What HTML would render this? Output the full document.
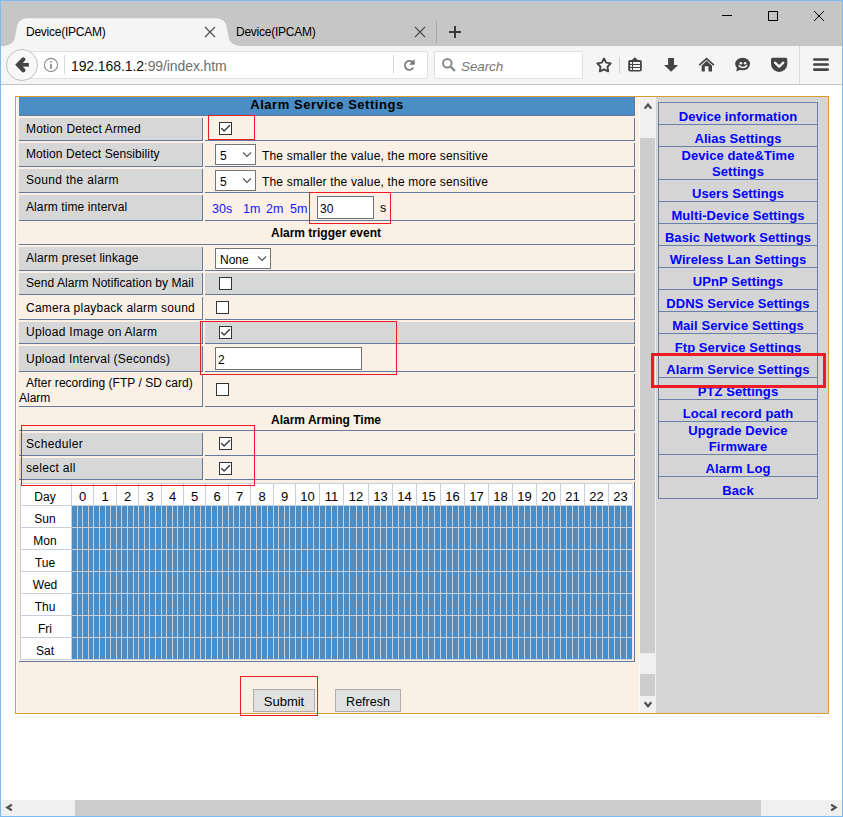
<!DOCTYPE html>
<html><head><meta charset="utf-8"><title>Alarm Service Settings</title>
<style>
*{box-sizing:border-box;margin:0;padding:0}
html,body{width:843px;height:817px;overflow:hidden;background:#fff;font-family:"Liberation Sans",sans-serif;color:#000}
.a{position:absolute}
.t{white-space:nowrap}
svg{display:block}
</style></head><body>

<div class="a" style="left:0px;top:0px;width:843px;height:817px;background:#7cbaf2;"></div>
<div class="a" style="left:1px;top:1px;width:841px;height:815px;background:#ffffff;"></div>
<div class="a" style="left:1px;top:1px;width:841px;height:45px;background:#c6c6c6;"></div>
<div class="a" style="left:1px;top:46px;width:841px;height:38px;background:#f5f5f5;"></div>
<div class="a" style="left:1px;top:84px;width:841px;height:1px;background:#c4c4c4;"></div>
<svg class="a" style="left:0;top:0" width="260" height="47" viewBox="0 0 260 47"><path d="M1 46 C9 46 13.6 43.5 15 37 L17 26.5 C18.3 20.5 22 18.2 29 18.2 L214.6 18.2 C221.6 18.2 225.3 20.5 226.6 26.5 L228.6 37 C230 43.5 234.6 46 242.6 46 Z" fill="#f5f5f5"/></svg>
<div class="a t" style="left:26px;top:26px;font-size:12px;line-height:12px;color:#000;letter-spacing:-0.25px;">Device(IPCAM)</div>
<div class="a t" style="left:236px;top:26px;font-size:12px;line-height:12px;color:#000;letter-spacing:-0.25px;">Device(IPCAM)</div>
<svg class="a" style="left:204px;top:26px" width="12" height="12" viewBox="0 0 12 12"><path d="M1 1 L11 11 M11 1 L1 11" stroke="#4a4a4a" stroke-width="1.1"/></svg>
<svg class="a" style="left:414px;top:26px" width="12" height="12" viewBox="0 0 12 12"><path d="M1 1 L11 11 M11 1 L1 11" stroke="#4a4a4a" stroke-width="1.1"/></svg>
<div class="a" style="left:436px;top:21px;width:1px;height:22px;background:#a8a8a8;"></div>
<svg class="a" style="left:448px;top:25px" width="14" height="14" viewBox="0 0 14 14"><path d="M7 1 V13 M1 7 H13" stroke="#3a3a3a" stroke-width="2"/></svg>
<div class="a" style="left:722px;top:15px;width:10px;height:1px;background:#000;"></div>
<div class="a" style="left:768px;top:11px;width:10px;height:10px;border:1px solid #000"></div>
<svg class="a" style="left:813px;top:10px" width="12" height="12" viewBox="0 0 12 12"><path d="M1 1 L11 11 M11 1 L1 11" stroke="#000" stroke-width="1"/></svg>
<div class="a" style="left:30px;top:51px;width:398px;height:28px;border:1px solid #e0e0e0;background:#fff;border-radius:0 2px 2px 0"></div>
<div class="a" style="left:6px;top:49px;width:32px;height:32px;border:1px solid #c2c2c2;border-radius:50%;background:#f8f8f8"></div>
<svg class="a" style="left:14px;top:57px" width="16" height="16" viewBox="0 0 16 16"><path d="M9.3 2.4 L4.1 7.8 L9.3 13.2" fill="none" stroke="#454545" stroke-width="4.2" stroke-linejoin="miter" stroke-linecap="round"/><path d="M5 7.8 H14.9" stroke="#454545" stroke-width="3.7"/></svg>
<svg class="a" style="left:43px;top:57px" width="16" height="16" viewBox="0 0 16 16"><circle cx="8" cy="8" r="6.6" fill="none" stroke="#8a8a8a" stroke-width="1.1"/><rect x="7.1" y="7.2" width="1.8" height="4.7" fill="#8a8a8a"/><rect x="7.1" y="4.1" width="1.8" height="1.6" fill="#8a8a8a"/></svg>
<div class="a" style="left:64px;top:55px;width:1px;height:19px;background:#d8d8d8;"></div>
<div class="a t" style="left:71px;top:58px;font-size:14px;line-height:16px;letter-spacing:-0.1px"><span style="color:#111">192.168.1.2</span><span style="color:#6e6e6e">:99/index.htm</span></div>
<div class="a" style="left:393px;top:55px;width:1px;height:19px;background:#d8d8d8;"></div>
<svg class="a" style="left:402px;top:57px" width="16" height="16" viewBox="0 0 16 16"><path d="M10.26 4.99 A4.45 4.45 0 1 0 10.81 11.26" fill="none" stroke="#727272" stroke-width="1.75" stroke-linecap="round"/><path d="M12.6 2 L12.6 7.8 L7.2 7.8 Z" fill="#727272"/></svg>
<div class="a" style="left:434px;top:51px;width:149px;height:28px;border:1px solid #e0e0e0;background:#fff;border-radius:2px"></div>
<svg class="a" style="left:441px;top:57px" width="16" height="16" viewBox="0 0 16 16"><circle cx="6.3" cy="6.3" r="4.3" fill="none" stroke="#8a8a8a" stroke-width="2"/><path d="M9.3 9.3 L14 14" stroke="#8a8a8a" stroke-width="2.4"/></svg>
<div class="a t" style="left:461px;top:60px;font-size:13.5px;line-height:13.5px;color:#777;letter-spacing:-0.1px;font-style:italic;">Search</div>
<svg class="a" style="left:595px;top:56px" width="18" height="18" viewBox="0 0 18 18"><path d="M9.00 2.50 L11.17 6.61 L15.75 7.41 L12.52 10.74 L13.17 15.34 L9.00 13.30 L4.83 15.34 L5.48 10.74 L2.25 7.41 L6.83 6.61 Z" fill="none" stroke="#444" stroke-width="1.9" stroke-linejoin="round"/></svg>
<div class="a" style="left:619px;top:57px;width:1px;height:16px;background:#cfcfcf;"></div>
<svg class="a" style="left:627px;top:56px" width="16" height="17" viewBox="0 0 16 17"><rect x="1.2" y="4" width="13.6" height="11.6" rx="1.8" fill="#444"/><path d="M7.9 1.2 L4.7 4.3 L11.1 4.3 Z" fill="#444"/><rect x="3.2" y="6" width="1.8" height="2" fill="#f5f5f5"/><rect x="6" y="6" width="7" height="2" fill="#f5f5f5"/><rect x="3.2" y="9" width="1.8" height="2" fill="#f5f5f5"/><rect x="6" y="9" width="7" height="2" fill="#f5f5f5"/><rect x="3.2" y="12" width="1.8" height="2" fill="#f5f5f5"/><rect x="6" y="12" width="7" height="2" fill="#f5f5f5"/></svg>
<svg class="a" style="left:663px;top:57px" width="17" height="16" viewBox="0 0 17 16"><path d="M5.1 0.9 H11 V8 H15.2 L8.1 14.7 L1 8 H5.1 Z" fill="#444"/></svg>
<svg class="a" style="left:698px;top:56px" width="18" height="17" viewBox="0 0 18 17"><path d="M1.3 9.2 L8.6 2.6 L15.9 9.2" fill="none" stroke="#444" stroke-width="1.7"/><path d="M8.6 4.8 L14 9.7 V15.6 H10.5 V10.3 H6.8 V15.6 H3.7 V9.7 Z" fill="#444"/></svg>
<svg class="a" style="left:734px;top:56px" width="17" height="17" viewBox="0 0 17 17"><ellipse cx="8.6" cy="8" rx="7.4" ry="6.3" fill="#444"/><path d="M3.2 11.5 L2.2 15.4 L7 13.6 Z" fill="#444"/><circle cx="6.9" cy="7.2" r="1.3" fill="#f5f5f5"/><circle cx="11.1" cy="7.2" r="1.3" fill="#f5f5f5"/><path d="M4.6 9.4 Q8.9 13.6 13.2 9.4" fill="none" stroke="#f5f5f5" stroke-width="1.5"/></svg>
<svg class="a" style="left:770px;top:57px" width="19" height="17" viewBox="0 0 19 17"><path d="M1 2.5 Q1 0.8 2.7 0.8 H15.6 Q17.3 0.8 17.3 2.5 V7 A8.15 7.9 0 0 1 1 7 Z" fill="#444"/><path d="M5 5.7 L9.15 9.7 L13.3 5.7" fill="none" stroke="#f5f5f5" stroke-width="2.3" stroke-linecap="round" stroke-linejoin="round"/></svg>
<div class="a" style="left:799px;top:46px;width:1px;height:38px;background:#dcdcdc;"></div>
<svg class="a" style="left:812px;top:57px" width="18" height="16" viewBox="0 0 18 16"><path d="M2.3 2.5 H15.7 M2.3 7.5 H15.7 M2.3 12.6 H15.7" stroke="#444" stroke-width="2.6" stroke-linecap="round"/></svg>
<div class="a" style="left:1px;top:800px;width:841px;height:16px;background:#f0f0f0;"></div>
<div class="a" style="left:75px;top:800px;width:686px;height:16px;background:#cdcdcd;"></div>
<svg class="a" style="left:4px;top:803px" width="10" height="10" viewBox="0 0 10 10"><path d="M7.9 1.6 L3.4 4.5 L7.9 7.4" fill="none" stroke="#505050" stroke-width="2.3"/></svg>
<svg class="a" style="left:829px;top:803px" width="10" height="10" viewBox="0 0 10 10"><path d="M2.1 1.6 L6.6 4.5 L2.1 7.4" fill="none" stroke="#505050" stroke-width="2.3"/></svg>
<div class="a" style="left:15px;top:96px;width:814px;height:618px;border:1px solid #d59e36;background:#faf0e6"></div>
<div class="a" style="left:16px;top:97px;width:1px;height:616px;background:#fffaf4;"></div>
<div class="a" style="left:639px;top:97px;width:17px;height:616px;background:#f0f0f0;"></div>
<div class="a" style="left:640px;top:138px;width:15px;height:515px;background:#cdcdcd;"></div>
<div class="a" style="left:640px;top:674px;width:15px;height:22px;background:#cdcdcd;"></div>
<div class="a" style="left:639px;top:97px;width:1px;height:616px;background:#fafafa;"></div>
<svg class="a" style="left:642px;top:101px" width="12" height="10" viewBox="0 0 12 10"><path d="M2.7 7.6 L6 3.6 L9.3 7.6" fill="none" stroke="#505050" stroke-width="2.2"/></svg>
<svg class="a" style="left:642px;top:700px" width="12" height="10" viewBox="0 0 12 10"><path d="M2.7 2.3 L6 6.3 L9.3 2.3" fill="none" stroke="#505050" stroke-width="2.2"/></svg>
<div class="a" style="left:656px;top:97px;width:172px;height:616px;background:#d5d5d5;"></div>
<div class="a" style="left:19px;top:97px;width:616px;height:19px;background:#4a8ec5;border-right:1px solid #65799c;border-bottom:1px solid #65799c"></div>
<div class="a t" style="left:127px;width:400px;text-align:center;top:98px;font-size:13px;line-height:13px;color:#000;font-weight:bold;letter-spacing:0.54px;">Alarm Service Settings</div>
<div class="a" style="left:19px;top:118px;width:184px;height:23px;background:#d7d7d7;border-right:1px solid #65799c;border-bottom:1px solid #65799c"></div>
<div class="a" style="left:205px;top:118px;width:430px;height:23px;background:transparent;border-right:1px solid #65799c;border-bottom:1px solid #65799c"></div>
<div class="a t" style="left:26px;top:123px;font-size:12px;line-height:12px;color:#000;letter-spacing:0.15px;">Motion Detect Armed</div>
<svg class="a" style="left:219px;top:122px" width="13" height="13" viewBox="0 0 13 13"><rect x="0.5" y="0.5" width="12" height="12" fill="#fff" stroke="#333" stroke-width="1"/><path d="M2.6 6.4 L5.1 9.1 L10.6 3.4" fill="none" stroke="#3c3c3c" stroke-width="1.4" stroke-linecap="round" stroke-linejoin="round"/></svg>
<div class="a" style="left:19px;top:143px;width:184px;height:24px;background:#d7d7d7;border-right:1px solid #65799c;border-bottom:1px solid #65799c"></div>
<div class="a" style="left:205px;top:143px;width:430px;height:24px;background:transparent;border-right:1px solid #65799c;border-bottom:1px solid #65799c"></div>
<div class="a t" style="left:26px;top:148px;font-size:12px;line-height:12px;color:#000;letter-spacing:0.09px;">Motion Detect Sensibility</div>
<div class="a" style="left:215px;top:144px;width:41px;height:21px;border:1px solid #747474;background:#fff"></div>
<div class="a t" style="left:220px;top:150px;font-size:12px;line-height:12px;color:#000;">5</div>
<svg class="a" style="left:242px;top:151px" width="10" height="7" viewBox="0 0 10 7"><path d="M1 1.5 L5 5.5 L9 1.5" fill="none" stroke="#555" stroke-width="1.1"/></svg>
<div class="a t" style="left:262px;top:150px;font-size:12px;line-height:12px;color:#000;letter-spacing:0.18px;">The smaller the value, the more sensitive</div>
<div class="a" style="left:19px;top:169px;width:184px;height:24px;background:#d7d7d7;border-right:1px solid #65799c;border-bottom:1px solid #65799c"></div>
<div class="a" style="left:205px;top:169px;width:430px;height:24px;background:transparent;border-right:1px solid #65799c;border-bottom:1px solid #65799c"></div>
<div class="a t" style="left:26px;top:174px;font-size:12px;line-height:12px;color:#000;letter-spacing:0.32px;">Sound the alarm</div>
<div class="a" style="left:215px;top:170px;width:41px;height:21px;border:1px solid #747474;background:#fff"></div>
<div class="a t" style="left:220px;top:176px;font-size:12px;line-height:12px;color:#000;">5</div>
<svg class="a" style="left:242px;top:177px" width="10" height="7" viewBox="0 0 10 7"><path d="M1 1.5 L5 5.5 L9 1.5" fill="none" stroke="#555" stroke-width="1.1"/></svg>
<div class="a t" style="left:262px;top:176px;font-size:12px;line-height:12px;color:#000;letter-spacing:0.18px;">The smaller the value, the more sensitive</div>
<div class="a" style="left:19px;top:195px;width:184px;height:26px;background:#d7d7d7;border-right:1px solid #65799c;border-bottom:1px solid #65799c"></div>
<div class="a" style="left:205px;top:195px;width:430px;height:26px;background:transparent;border-right:1px solid #65799c;border-bottom:1px solid #65799c"></div>
<div class="a t" style="left:26px;top:201px;font-size:12px;line-height:12px;color:#000;letter-spacing:0.1px;">Alarm time interval</div>
<div class="a t" style="left:212px;top:203px;font-size:12.5px;line-height:12.5px;color:#1414ff;">30s</div>
<div class="a t" style="left:243px;top:203px;font-size:12.5px;line-height:12.5px;color:#1414ff;">1m</div>
<div class="a t" style="left:266px;top:203px;font-size:12.5px;line-height:12.5px;color:#1414ff;">2m</div>
<div class="a t" style="left:290px;top:203px;font-size:12.5px;line-height:12.5px;color:#1414ff;">5m</div>
<div class="a" style="left:317px;top:196px;width:57px;height:23px;border:1px solid #707070;background:#fff"></div>
<div class="a t" style="left:320px;top:203px;font-size:12px;line-height:12px;color:#000;">30</div>
<div class="a t" style="left:380px;top:202px;font-size:12.5px;line-height:12.5px;color:#000;">s</div>
<div class="a" style="left:19px;top:223px;width:616px;height:22px;border-right:1px solid #65799c;border-bottom:1px solid #65799c"></div>
<div class="a t" style="left:126px;width:400px;text-align:center;top:227px;font-size:12px;line-height:12px;color:#000;font-weight:bold;">Alarm trigger event</div>
<div class="a" style="left:19px;top:247px;width:184px;height:24px;background:#d7d7d7;border-right:1px solid #65799c;border-bottom:1px solid #65799c"></div>
<div class="a" style="left:205px;top:247px;width:430px;height:24px;background:transparent;border-right:1px solid #65799c;border-bottom:1px solid #65799c"></div>
<div class="a t" style="left:26px;top:252px;font-size:12px;line-height:12px;color:#000;letter-spacing:0.16px;">Alarm preset linkage</div>
<div class="a" style="left:215px;top:248px;width:56px;height:21px;border:1px solid #747474;background:#fff"></div>
<div class="a t" style="left:220px;top:254px;font-size:12px;line-height:12px;color:#000;">None</div>
<svg class="a" style="left:257px;top:255px" width="10" height="7" viewBox="0 0 10 7"><path d="M1 1.5 L5 5.5 L9 1.5" fill="none" stroke="#555" stroke-width="1.1"/></svg>
<div class="a" style="left:19px;top:273px;width:184px;height:22px;background:#d7d7d7;border-right:1px solid #65799c;border-bottom:1px solid #65799c"></div>
<div class="a" style="left:205px;top:273px;width:430px;height:22px;background:#d7d7d7;border-right:1px solid #65799c;border-bottom:1px solid #65799c"></div>
<div class="a t" style="left:26px;top:277px;font-size:12px;line-height:12px;color:#000;letter-spacing:0.05px;">Send Alarm Notification by Mail</div>
<svg class="a" style="left:219px;top:277px" width="13" height="13" viewBox="0 0 13 13"><rect x="0.5" y="0.5" width="12" height="12" fill="#fff" stroke="#333" stroke-width="1"/></svg>
<div class="a" style="left:19px;top:297px;width:184px;height:23px;background:transparent;border-right:1px solid #65799c;border-bottom:1px solid #65799c"></div>
<div class="a" style="left:205px;top:297px;width:430px;height:23px;background:transparent;border-right:1px solid #65799c;border-bottom:1px solid #65799c"></div>
<div class="a t" style="left:26px;top:302px;font-size:12px;line-height:12px;color:#000;letter-spacing:0.23px;">Camera playback alarm sound</div>
<svg class="a" style="left:216px;top:301px" width="13" height="13" viewBox="0 0 13 13"><rect x="0.5" y="0.5" width="12" height="12" fill="#fff" stroke="#333" stroke-width="1"/></svg>
<div class="a" style="left:19px;top:322px;width:184px;height:22px;background:#d7d7d7;border-right:1px solid #65799c;border-bottom:1px solid #65799c"></div>
<div class="a" style="left:205px;top:322px;width:430px;height:22px;background:#d7d7d7;border-right:1px solid #65799c;border-bottom:1px solid #65799c"></div>
<div class="a t" style="left:26px;top:326px;font-size:12px;line-height:12px;color:#000;letter-spacing:0.28px;">Upload Image on Alarm</div>
<svg class="a" style="left:219px;top:326px" width="13" height="13" viewBox="0 0 13 13"><rect x="0.5" y="0.5" width="12" height="12" fill="#fff" stroke="#333" stroke-width="1"/><path d="M2.6 6.4 L5.1 9.1 L10.6 3.4" fill="none" stroke="#3c3c3c" stroke-width="1.4" stroke-linecap="round" stroke-linejoin="round"/></svg>
<div class="a" style="left:19px;top:346px;width:184px;height:26px;background:#d7d7d7;border-right:1px solid #65799c;border-bottom:1px solid #65799c"></div>
<div class="a" style="left:205px;top:346px;width:430px;height:26px;background:transparent;border-right:1px solid #65799c;border-bottom:1px solid #65799c"></div>
<div class="a t" style="left:26px;top:353px;font-size:12px;line-height:12px;color:#000;letter-spacing:0.22px;">Upload Interval (Seconds)</div>
<div class="a" style="left:215px;top:347px;width:147px;height:23px;border:1px solid #707070;background:#fff"></div>
<div class="a t" style="left:218px;top:354px;font-size:12px;line-height:12px;color:#000;">2</div>
<div class="a" style="left:19px;top:374px;width:184px;height:33px;background:transparent;border-right:1px solid #65799c;border-bottom:1px solid #65799c"></div>
<div class="a" style="left:205px;top:374px;width:430px;height:33px;background:transparent;border-right:1px solid #65799c;border-bottom:1px solid #65799c"></div>
<div class="a t" style="left:26px;top:377px;font-size:12px;line-height:12px;color:#000;letter-spacing:0.03px;">After recording (FTP / SD card)</div>
<div class="a t" style="left:19px;top:392px;font-size:12px;line-height:12px;color:#000;">Alarm</div>
<svg class="a" style="left:216px;top:383px" width="13" height="13" viewBox="0 0 13 13"><rect x="0.5" y="0.5" width="12" height="12" fill="#fff" stroke="#333" stroke-width="1"/></svg>
<div class="a" style="left:19px;top:409px;width:616px;height:22px;border-right:1px solid #65799c;border-bottom:1px solid #65799c"></div>
<div class="a t" style="left:126px;width:400px;text-align:center;top:414px;font-size:12px;line-height:12px;color:#000;font-weight:bold;">Alarm Arming Time</div>
<div class="a" style="left:19px;top:433px;width:184px;height:23px;background:#d7d7d7;border-right:1px solid #65799c;border-bottom:1px solid #65799c"></div>
<div class="a" style="left:205px;top:433px;width:430px;height:23px;background:transparent;border-right:1px solid #65799c;border-bottom:1px solid #65799c"></div>
<div class="a t" style="left:26px;top:438px;font-size:12px;line-height:12px;color:#000;letter-spacing:0.35px;">Scheduler</div>
<svg class="a" style="left:219px;top:437px" width="13" height="13" viewBox="0 0 13 13"><rect x="0.5" y="0.5" width="12" height="12" fill="#fff" stroke="#333" stroke-width="1"/><path d="M2.6 6.4 L5.1 9.1 L10.6 3.4" fill="none" stroke="#3c3c3c" stroke-width="1.4" stroke-linecap="round" stroke-linejoin="round"/></svg>
<div class="a" style="left:19px;top:458px;width:184px;height:22px;background:#d7d7d7;border-right:1px solid #65799c;border-bottom:1px solid #65799c"></div>
<div class="a" style="left:205px;top:458px;width:430px;height:22px;background:transparent;border-right:1px solid #65799c;border-bottom:1px solid #65799c"></div>
<div class="a t" style="left:26px;top:462px;font-size:12px;line-height:12px;color:#000;letter-spacing:0.3px;">select all</div>
<svg class="a" style="left:219px;top:462px" width="13" height="13" viewBox="0 0 13 13"><rect x="0.5" y="0.5" width="12" height="12" fill="#fff" stroke="#333" stroke-width="1"/><path d="M2.6 6.4 L5.1 9.1 L10.6 3.4" fill="none" stroke="#3c3c3c" stroke-width="1.4" stroke-linecap="round" stroke-linejoin="round"/></svg>
<div class="a" style="left:19px;top:482px;width:616px;height:180px;border-right:1px solid #65799c;border-bottom:1px solid #65799c"></div>
<div class="a" style="left:20px;top:483px;width:613px;height:177px;background:#ffffff;"></div>
<div class="a" style="left:72px;top:506px;width:560px;height:153px;background:#4a8ec5;"></div>
<div class="a" style="left:20px;top:483px;width:613px;height:1px;background:#c9cfd9;"></div>
<div class="a" style="left:20px;top:505px;width:613px;height:1px;background:#c9cfd9;"></div>
<div class="a" style="left:20px;top:527px;width:613px;height:1px;background:#c9cfd9;"></div>
<div class="a" style="left:20px;top:549px;width:613px;height:1px;background:#c9cfd9;"></div>
<div class="a" style="left:20px;top:571px;width:613px;height:1px;background:#c9cfd9;"></div>
<div class="a" style="left:20px;top:593px;width:613px;height:1px;background:#c9cfd9;"></div>
<div class="a" style="left:20px;top:615px;width:613px;height:1px;background:#c9cfd9;"></div>
<div class="a" style="left:20px;top:637px;width:613px;height:1px;background:#c9cfd9;"></div>
<div class="a" style="left:20px;top:659px;width:613px;height:1px;background:#c9cfd9;"></div>
<div class="a" style="left:20px;top:483px;width:1px;height:177px;background:#c9cfd9;"></div>
<div class="a" style="left:71px;top:483px;width:1px;height:177px;background:#c9cfd9;"></div>
<div class="a" style="left:77px;top:506px;width:1px;height:153px;background:#c9cfd9;"></div>
<div class="a" style="left:82px;top:506px;width:1px;height:153px;background:#c9cfd9;"></div>
<div class="a" style="left:88px;top:506px;width:1px;height:153px;background:#c9cfd9;"></div>
<div class="a" style="left:93px;top:483px;width:1px;height:177px;background:#c9cfd9;"></div>
<div class="a" style="left:99px;top:506px;width:1px;height:153px;background:#c9cfd9;"></div>
<div class="a" style="left:105px;top:506px;width:1px;height:153px;background:#c9cfd9;"></div>
<div class="a" style="left:110px;top:506px;width:1px;height:153px;background:#c9cfd9;"></div>
<div class="a" style="left:116px;top:483px;width:1px;height:177px;background:#c9cfd9;"></div>
<div class="a" style="left:121px;top:506px;width:1px;height:153px;background:#c9cfd9;"></div>
<div class="a" style="left:127px;top:506px;width:1px;height:153px;background:#c9cfd9;"></div>
<div class="a" style="left:133px;top:506px;width:1px;height:153px;background:#c9cfd9;"></div>
<div class="a" style="left:138px;top:483px;width:1px;height:177px;background:#c9cfd9;"></div>
<div class="a" style="left:144px;top:506px;width:1px;height:153px;background:#c9cfd9;"></div>
<div class="a" style="left:149px;top:506px;width:1px;height:153px;background:#c9cfd9;"></div>
<div class="a" style="left:155px;top:506px;width:1px;height:153px;background:#c9cfd9;"></div>
<div class="a" style="left:161px;top:483px;width:1px;height:177px;background:#c9cfd9;"></div>
<div class="a" style="left:166px;top:506px;width:1px;height:153px;background:#c9cfd9;"></div>
<div class="a" style="left:172px;top:506px;width:1px;height:153px;background:#c9cfd9;"></div>
<div class="a" style="left:177px;top:506px;width:1px;height:153px;background:#c9cfd9;"></div>
<div class="a" style="left:183px;top:483px;width:1px;height:177px;background:#c9cfd9;"></div>
<div class="a" style="left:189px;top:506px;width:1px;height:153px;background:#c9cfd9;"></div>
<div class="a" style="left:194px;top:506px;width:1px;height:153px;background:#c9cfd9;"></div>
<div class="a" style="left:200px;top:506px;width:1px;height:153px;background:#c9cfd9;"></div>
<div class="a" style="left:205px;top:483px;width:1px;height:177px;background:#c9cfd9;"></div>
<div class="a" style="left:211px;top:506px;width:1px;height:153px;background:#c9cfd9;"></div>
<div class="a" style="left:217px;top:506px;width:1px;height:153px;background:#c9cfd9;"></div>
<div class="a" style="left:222px;top:506px;width:1px;height:153px;background:#c9cfd9;"></div>
<div class="a" style="left:228px;top:483px;width:1px;height:177px;background:#c9cfd9;"></div>
<div class="a" style="left:233px;top:506px;width:1px;height:153px;background:#c9cfd9;"></div>
<div class="a" style="left:239px;top:506px;width:1px;height:153px;background:#c9cfd9;"></div>
<div class="a" style="left:245px;top:506px;width:1px;height:153px;background:#c9cfd9;"></div>
<div class="a" style="left:250px;top:483px;width:1px;height:177px;background:#c9cfd9;"></div>
<div class="a" style="left:256px;top:506px;width:1px;height:153px;background:#c9cfd9;"></div>
<div class="a" style="left:261px;top:506px;width:1px;height:153px;background:#c9cfd9;"></div>
<div class="a" style="left:267px;top:506px;width:1px;height:153px;background:#c9cfd9;"></div>
<div class="a" style="left:273px;top:483px;width:1px;height:177px;background:#c9cfd9;"></div>
<div class="a" style="left:278px;top:506px;width:1px;height:153px;background:#c9cfd9;"></div>
<div class="a" style="left:284px;top:506px;width:1px;height:153px;background:#c9cfd9;"></div>
<div class="a" style="left:289px;top:506px;width:1px;height:153px;background:#c9cfd9;"></div>
<div class="a" style="left:295px;top:483px;width:1px;height:177px;background:#c9cfd9;"></div>
<div class="a" style="left:301px;top:506px;width:1px;height:153px;background:#c9cfd9;"></div>
<div class="a" style="left:307px;top:506px;width:1px;height:153px;background:#c9cfd9;"></div>
<div class="a" style="left:313px;top:506px;width:1px;height:153px;background:#c9cfd9;"></div>
<div class="a" style="left:319px;top:483px;width:1px;height:177px;background:#c9cfd9;"></div>
<div class="a" style="left:325px;top:506px;width:1px;height:153px;background:#c9cfd9;"></div>
<div class="a" style="left:331px;top:506px;width:1px;height:153px;background:#c9cfd9;"></div>
<div class="a" style="left:337px;top:506px;width:1px;height:153px;background:#c9cfd9;"></div>
<div class="a" style="left:343px;top:483px;width:1px;height:177px;background:#c9cfd9;"></div>
<div class="a" style="left:349px;top:506px;width:1px;height:153px;background:#c9cfd9;"></div>
<div class="a" style="left:356px;top:506px;width:1px;height:153px;background:#c9cfd9;"></div>
<div class="a" style="left:362px;top:506px;width:1px;height:153px;background:#c9cfd9;"></div>
<div class="a" style="left:368px;top:483px;width:1px;height:177px;background:#c9cfd9;"></div>
<div class="a" style="left:374px;top:506px;width:1px;height:153px;background:#c9cfd9;"></div>
<div class="a" style="left:380px;top:506px;width:1px;height:153px;background:#c9cfd9;"></div>
<div class="a" style="left:386px;top:506px;width:1px;height:153px;background:#c9cfd9;"></div>
<div class="a" style="left:392px;top:483px;width:1px;height:177px;background:#c9cfd9;"></div>
<div class="a" style="left:398px;top:506px;width:1px;height:153px;background:#c9cfd9;"></div>
<div class="a" style="left:404px;top:506px;width:1px;height:153px;background:#c9cfd9;"></div>
<div class="a" style="left:410px;top:506px;width:1px;height:153px;background:#c9cfd9;"></div>
<div class="a" style="left:416px;top:483px;width:1px;height:177px;background:#c9cfd9;"></div>
<div class="a" style="left:422px;top:506px;width:1px;height:153px;background:#c9cfd9;"></div>
<div class="a" style="left:428px;top:506px;width:1px;height:153px;background:#c9cfd9;"></div>
<div class="a" style="left:434px;top:506px;width:1px;height:153px;background:#c9cfd9;"></div>
<div class="a" style="left:440px;top:483px;width:1px;height:177px;background:#c9cfd9;"></div>
<div class="a" style="left:446px;top:506px;width:1px;height:153px;background:#c9cfd9;"></div>
<div class="a" style="left:452px;top:506px;width:1px;height:153px;background:#c9cfd9;"></div>
<div class="a" style="left:458px;top:506px;width:1px;height:153px;background:#c9cfd9;"></div>
<div class="a" style="left:464px;top:483px;width:1px;height:177px;background:#c9cfd9;"></div>
<div class="a" style="left:470px;top:506px;width:1px;height:153px;background:#c9cfd9;"></div>
<div class="a" style="left:476px;top:506px;width:1px;height:153px;background:#c9cfd9;"></div>
<div class="a" style="left:482px;top:506px;width:1px;height:153px;background:#c9cfd9;"></div>
<div class="a" style="left:488px;top:483px;width:1px;height:177px;background:#c9cfd9;"></div>
<div class="a" style="left:494px;top:506px;width:1px;height:153px;background:#c9cfd9;"></div>
<div class="a" style="left:500px;top:506px;width:1px;height:153px;background:#c9cfd9;"></div>
<div class="a" style="left:506px;top:506px;width:1px;height:153px;background:#c9cfd9;"></div>
<div class="a" style="left:512px;top:483px;width:1px;height:177px;background:#c9cfd9;"></div>
<div class="a" style="left:518px;top:506px;width:1px;height:153px;background:#c9cfd9;"></div>
<div class="a" style="left:524px;top:506px;width:1px;height:153px;background:#c9cfd9;"></div>
<div class="a" style="left:530px;top:506px;width:1px;height:153px;background:#c9cfd9;"></div>
<div class="a" style="left:536px;top:483px;width:1px;height:177px;background:#c9cfd9;"></div>
<div class="a" style="left:542px;top:506px;width:1px;height:153px;background:#c9cfd9;"></div>
<div class="a" style="left:548px;top:506px;width:1px;height:153px;background:#c9cfd9;"></div>
<div class="a" style="left:554px;top:506px;width:1px;height:153px;background:#c9cfd9;"></div>
<div class="a" style="left:560px;top:483px;width:1px;height:177px;background:#c9cfd9;"></div>
<div class="a" style="left:566px;top:506px;width:1px;height:153px;background:#c9cfd9;"></div>
<div class="a" style="left:572px;top:506px;width:1px;height:153px;background:#c9cfd9;"></div>
<div class="a" style="left:578px;top:506px;width:1px;height:153px;background:#c9cfd9;"></div>
<div class="a" style="left:584px;top:483px;width:1px;height:177px;background:#c9cfd9;"></div>
<div class="a" style="left:590px;top:506px;width:1px;height:153px;background:#c9cfd9;"></div>
<div class="a" style="left:596px;top:506px;width:1px;height:153px;background:#c9cfd9;"></div>
<div class="a" style="left:602px;top:506px;width:1px;height:153px;background:#c9cfd9;"></div>
<div class="a" style="left:608px;top:483px;width:1px;height:177px;background:#c9cfd9;"></div>
<div class="a" style="left:614px;top:506px;width:1px;height:153px;background:#c9cfd9;"></div>
<div class="a" style="left:620px;top:506px;width:1px;height:153px;background:#c9cfd9;"></div>
<div class="a" style="left:626px;top:506px;width:1px;height:153px;background:#c9cfd9;"></div>
<div class="a" style="left:632px;top:483px;width:1px;height:177px;background:#c9cfd9;"></div>
<div class="a" style="left:632px;top:483px;width:1px;height:177px;background:#e8eaee;"></div>
<div class="a t" style="left:15px;width:60px;text-align:center;top:491px;font-size:12px;line-height:12px;color:#000;">Day</div>
<div class="a t" style="left:15px;width:60px;text-align:center;top:513px;font-size:12px;line-height:12px;color:#000;">Sun</div>
<div class="a t" style="left:15px;width:60px;text-align:center;top:535px;font-size:12px;line-height:12px;color:#000;">Mon</div>
<div class="a t" style="left:15px;width:60px;text-align:center;top:557px;font-size:12px;line-height:12px;color:#000;">Tue</div>
<div class="a t" style="left:15px;width:60px;text-align:center;top:579px;font-size:12px;line-height:12px;color:#000;">Wed</div>
<div class="a t" style="left:15px;width:60px;text-align:center;top:601px;font-size:12px;line-height:12px;color:#000;">Thu</div>
<div class="a t" style="left:15px;width:60px;text-align:center;top:623px;font-size:12px;line-height:12px;color:#000;">Fri</div>
<div class="a t" style="left:15px;width:60px;text-align:center;top:645px;font-size:12px;line-height:12px;color:#000;">Sat</div>
<div class="a t" style="left:67.5px;width:30px;text-align:center;top:490px;font-size:13px;line-height:13px">0</div>
<div class="a t" style="left:90.0px;width:30px;text-align:center;top:490px;font-size:13px;line-height:13px">1</div>
<div class="a t" style="left:112.5px;width:30px;text-align:center;top:490px;font-size:13px;line-height:13px">2</div>
<div class="a t" style="left:135.0px;width:30px;text-align:center;top:490px;font-size:13px;line-height:13px">3</div>
<div class="a t" style="left:157.5px;width:30px;text-align:center;top:490px;font-size:13px;line-height:13px">4</div>
<div class="a t" style="left:179.5px;width:30px;text-align:center;top:490px;font-size:13px;line-height:13px">5</div>
<div class="a t" style="left:202.0px;width:30px;text-align:center;top:490px;font-size:13px;line-height:13px">6</div>
<div class="a t" style="left:224.5px;width:30px;text-align:center;top:490px;font-size:13px;line-height:13px">7</div>
<div class="a t" style="left:247.0px;width:30px;text-align:center;top:490px;font-size:13px;line-height:13px">8</div>
<div class="a t" style="left:269.5px;width:30px;text-align:center;top:490px;font-size:13px;line-height:13px">9</div>
<div class="a t" style="left:292.5px;width:30px;text-align:center;top:490px;font-size:13px;line-height:13px">10</div>
<div class="a t" style="left:316.5px;width:30px;text-align:center;top:490px;font-size:13px;line-height:13px">11</div>
<div class="a t" style="left:341.0px;width:30px;text-align:center;top:490px;font-size:13px;line-height:13px">12</div>
<div class="a t" style="left:365.5px;width:30px;text-align:center;top:490px;font-size:13px;line-height:13px">13</div>
<div class="a t" style="left:389.5px;width:30px;text-align:center;top:490px;font-size:13px;line-height:13px">14</div>
<div class="a t" style="left:413.5px;width:30px;text-align:center;top:490px;font-size:13px;line-height:13px">15</div>
<div class="a t" style="left:437.5px;width:30px;text-align:center;top:490px;font-size:13px;line-height:13px">16</div>
<div class="a t" style="left:461.5px;width:30px;text-align:center;top:490px;font-size:13px;line-height:13px">17</div>
<div class="a t" style="left:485.5px;width:30px;text-align:center;top:490px;font-size:13px;line-height:13px">18</div>
<div class="a t" style="left:509.5px;width:30px;text-align:center;top:490px;font-size:13px;line-height:13px">19</div>
<div class="a t" style="left:533.5px;width:30px;text-align:center;top:490px;font-size:13px;line-height:13px">20</div>
<div class="a t" style="left:557.5px;width:30px;text-align:center;top:490px;font-size:13px;line-height:13px">21</div>
<div class="a t" style="left:581.5px;width:30px;text-align:center;top:490px;font-size:13px;line-height:13px">22</div>
<div class="a t" style="left:605.5px;width:30px;text-align:center;top:490px;font-size:13px;line-height:13px">23</div>
<div class="a" style="left:253px;top:689px;width:62px;height:23px;border:1px solid #adadad;background:#e1e1e1"></div>
<div class="a t" style="left:254px;width:60px;text-align:center;top:695px;font-size:13px;line-height:13px;color:#000;">Submit</div>
<div class="a" style="left:335px;top:689px;width:66px;height:23px;border:1px solid #adadad;background:#e1e1e1"></div>
<div class="a t" style="left:336px;width:64px;text-align:center;top:696px;font-size:12.5px;line-height:12.5px;color:#000;">Refresh</div>
<div class="a" style="left:658px;top:102px;width:160px;height:397px;border:1px solid #65799c;border-color:#6b80a8"></div>
<div class="a" style="left:659px;top:124px;width:158px;height:1px;background:#6b80a8;"></div>
<div class="a" style="left:659px;top:146px;width:158px;height:1px;background:#6b80a8;"></div>
<div class="a" style="left:659px;top:179px;width:158px;height:1px;background:#6b80a8;"></div>
<div class="a" style="left:659px;top:201px;width:158px;height:1px;background:#6b80a8;"></div>
<div class="a" style="left:659px;top:223px;width:158px;height:1px;background:#6b80a8;"></div>
<div class="a" style="left:659px;top:245px;width:158px;height:1px;background:#6b80a8;"></div>
<div class="a" style="left:659px;top:267px;width:158px;height:1px;background:#6b80a8;"></div>
<div class="a" style="left:659px;top:289px;width:158px;height:1px;background:#6b80a8;"></div>
<div class="a" style="left:659px;top:311px;width:158px;height:1px;background:#6b80a8;"></div>
<div class="a" style="left:659px;top:333px;width:158px;height:1px;background:#6b80a8;"></div>
<div class="a" style="left:659px;top:355px;width:158px;height:1px;background:#6b80a8;"></div>
<div class="a" style="left:659px;top:377px;width:158px;height:1px;background:#6b80a8;"></div>
<div class="a" style="left:659px;top:399px;width:158px;height:1px;background:#6b80a8;"></div>
<div class="a" style="left:659px;top:421px;width:158px;height:1px;background:#6b80a8;"></div>
<div class="a" style="left:659px;top:454px;width:158px;height:1px;background:#6b80a8;"></div>
<div class="a" style="left:659px;top:476px;width:158px;height:1px;background:#6b80a8;"></div>
<div class="a t" style="left:659px;width:158px;text-align:center;top:110px;font-size:13px;line-height:13px;font-weight:bold;color:#0000ff;letter-spacing:0.08px">Device information</div>
<div class="a t" style="left:659px;width:158px;text-align:center;top:132px;font-size:13px;line-height:13px;font-weight:bold;color:#0000ff;letter-spacing:0.08px">Alias Settings</div>
<div class="a t" style="left:659px;width:158px;text-align:center;top:148px;font-size:13px;line-height:16px;font-weight:bold;color:#0000ff;letter-spacing:0.08px">Device date&amp;Time<br>Settings</div>
<div class="a t" style="left:659px;width:158px;text-align:center;top:187px;font-size:13px;line-height:13px;font-weight:bold;color:#0000ff;letter-spacing:0.08px">Users Settings</div>
<div class="a t" style="left:659px;width:158px;text-align:center;top:209px;font-size:13px;line-height:13px;font-weight:bold;color:#0000ff;letter-spacing:0.08px">Multi-Device Settings</div>
<div class="a t" style="left:659px;width:158px;text-align:center;top:231px;font-size:13px;line-height:13px;font-weight:bold;color:#0000ff;letter-spacing:0.08px">Basic Network Settings</div>
<div class="a t" style="left:659px;width:158px;text-align:center;top:253px;font-size:13px;line-height:13px;font-weight:bold;color:#0000ff;letter-spacing:0.08px">Wireless Lan Settings</div>
<div class="a t" style="left:659px;width:158px;text-align:center;top:275px;font-size:13px;line-height:13px;font-weight:bold;color:#0000ff;letter-spacing:0.08px">UPnP Settings</div>
<div class="a t" style="left:659px;width:158px;text-align:center;top:297px;font-size:13px;line-height:13px;font-weight:bold;color:#0000ff;letter-spacing:0.08px">DDNS Service Settings</div>
<div class="a t" style="left:659px;width:158px;text-align:center;top:319px;font-size:13px;line-height:13px;font-weight:bold;color:#0000ff;letter-spacing:0.08px">Mail Service Settings</div>
<div class="a t" style="left:659px;width:158px;text-align:center;top:341px;font-size:13px;line-height:13px;font-weight:bold;color:#0000ff;letter-spacing:0.08px">Ftp Service Settings</div>
<div class="a t" style="left:659px;width:158px;text-align:center;top:363px;font-size:13px;line-height:13px;font-weight:bold;color:#0000ff;letter-spacing:0.08px">Alarm Service Settings</div>
<div class="a t" style="left:659px;width:158px;text-align:center;top:385px;font-size:13px;line-height:13px;font-weight:bold;color:#0000ff;letter-spacing:0.08px">PTZ Settings</div>
<div class="a t" style="left:659px;width:158px;text-align:center;top:407px;font-size:13px;line-height:13px;font-weight:bold;color:#0000ff;letter-spacing:0.08px">Local record path</div>
<div class="a t" style="left:659px;width:158px;text-align:center;top:423px;font-size:13px;line-height:16px;font-weight:bold;color:#0000ff;letter-spacing:0.08px">Upgrade Device<br>Firmware</div>
<div class="a t" style="left:659px;width:158px;text-align:center;top:462px;font-size:13px;line-height:13px;font-weight:bold;color:#0000ff;letter-spacing:0.08px">Alarm Log</div>
<div class="a t" style="left:659px;width:158px;text-align:center;top:484px;font-size:13px;line-height:13px;font-weight:bold;color:#0000ff;letter-spacing:0.08px">Back</div>
<div class="a" style="left:208px;top:115px;width:47px;height:25px;border:1px solid #ed1c24"></div>
<div class="a" style="left:309px;top:192px;width:82px;height:32px;border:1px solid #ed1c24"></div>
<div class="a" style="left:200px;top:321px;width:197px;height:54px;border:1px solid #ed1c24"></div>
<div class="a" style="left:21px;top:425px;width:234px;height:61px;border:1px solid #ed1c24"></div>
<div class="a" style="left:240px;top:676px;width:78px;height:40px;border:1px solid #ed1c24"></div>
<div class="a" style="left:651px;top:353px;width:175px;height:35px;border:3px solid #ed1c24"></div>
</body></html>
